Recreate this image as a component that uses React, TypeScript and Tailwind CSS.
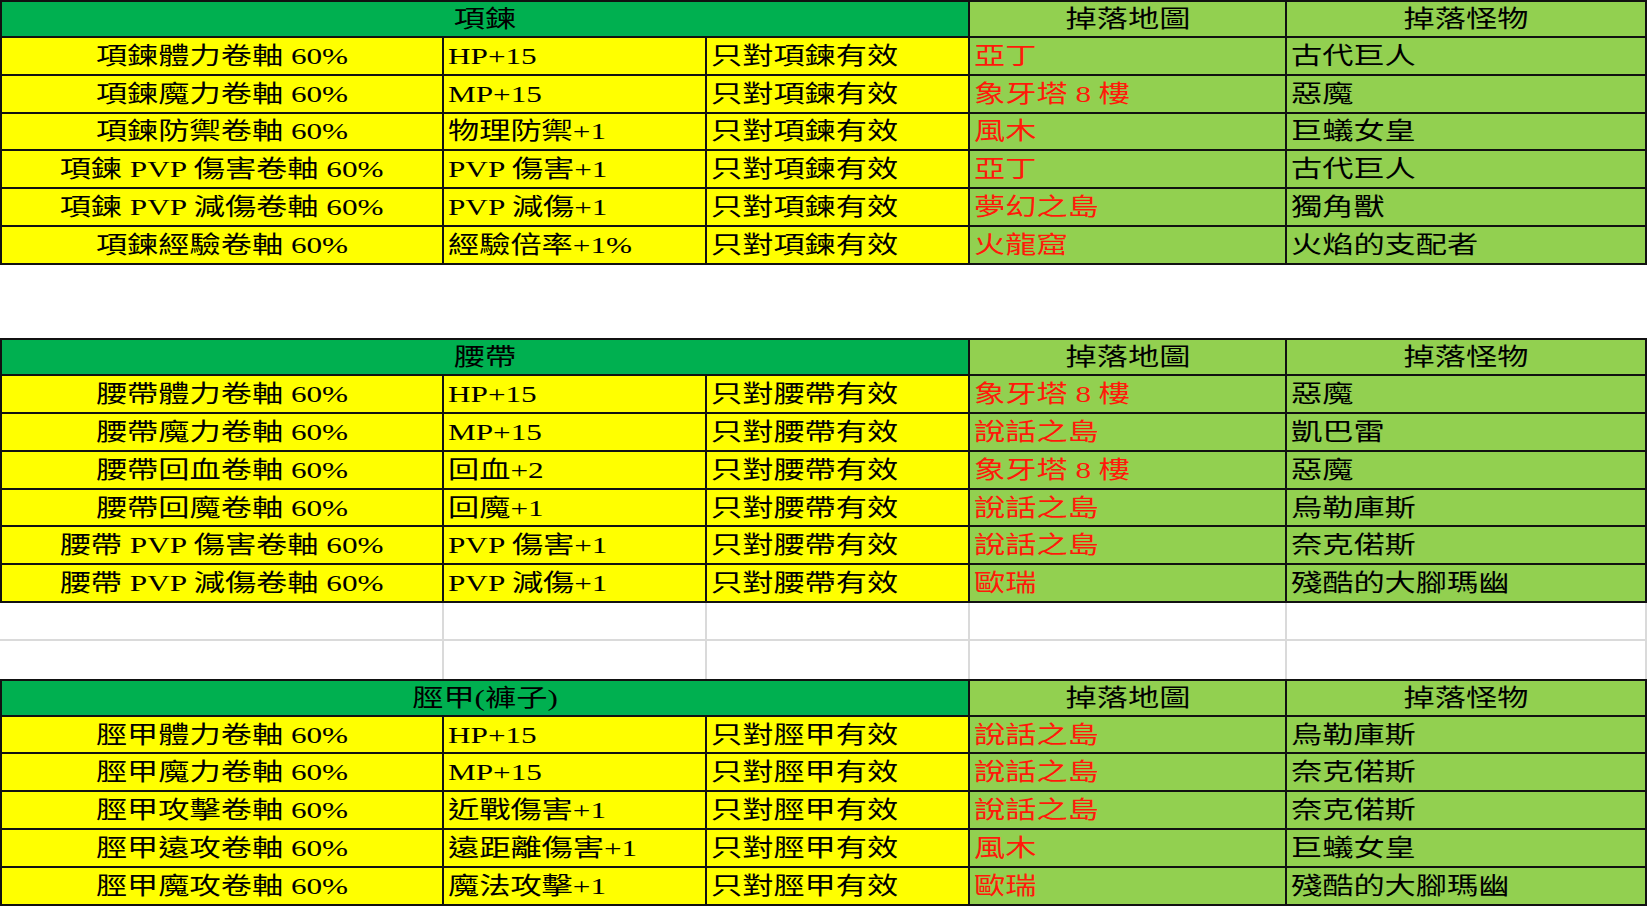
type Row = [string, string, string, string, string];

const necklace: Row[] = [
  ["項鍊體力卷軸 60%", "HP+15", "只對項鍊有效", "亞丁", "古代巨人"],
  ["項鍊魔力卷軸 60%", "MP+15", "只對項鍊有效", "象牙塔 8 樓", "惡魔"],
  ["項鍊防禦卷軸 60%", "物理防禦+1", "只對項鍊有效", "風木", "巨蟻女皇"],
  ["項鍊 PVP 傷害卷軸 60%", "PVP 傷害+1", "只對項鍊有效", "亞丁", "古代巨人"],
  ["項鍊 PVP 減傷卷軸 60%", "PVP 減傷+1", "只對項鍊有效", "夢幻之島", "獨角獸"],
  ["項鍊經驗卷軸 60%", "經驗倍率+1%", "只對項鍊有效", "火龍窟", "火焰的支配者"],
];

const belt: Row[] = [
  ["腰帶體力卷軸 60%", "HP+15", "只對腰帶有效", "象牙塔 8 樓", "惡魔"],
  ["腰帶魔力卷軸 60%", "MP+15", "只對腰帶有效", "說話之島", "凱巴雷"],
  ["腰帶回血卷軸 60%", "回血+2", "只對腰帶有效", "象牙塔 8 樓", "惡魔"],
  ["腰帶回魔卷軸 60%", "回魔+1", "只對腰帶有效", "說話之島", "烏勒庫斯"],
  ["腰帶 PVP 傷害卷軸 60%", "PVP 傷害+1", "只對腰帶有效", "說話之島", "奈克偌斯"],
  ["腰帶 PVP 減傷卷軸 60%", "PVP 減傷+1", "只對腰帶有效", "歐瑞", "殘酷的大腳瑪幽"],
];

const greaves: Row[] = [
  ["脛甲體力卷軸 60%", "HP+15", "只對脛甲有效", "說話之島", "烏勒庫斯"],
  ["脛甲魔力卷軸 60%", "MP+15", "只對脛甲有效", "說話之島", "奈克偌斯"],
  ["脛甲攻擊卷軸 60%", "近戰傷害+1", "只對脛甲有效", "說話之島", "奈克偌斯"],
  ["脛甲遠攻卷軸 60%", "遠距離傷害+1", "只對脛甲有效", "風木", "巨蟻女皇"],
  ["脛甲魔攻卷軸 60%", "魔法攻擊+1", "只對脛甲有效", "歐瑞", "殘酷的大腳瑪幽"],
];

const grid = "grid grid-cols-[444px_263px_263px_317px_360px] h-[37.85px]";
const cell = "flex items-center border-r-2 border-b-2 border-[#111] overflow-hidden";

function Txt({ children, center }: { children: string; center?: boolean }) {
  return (
    <span
      className={
        "inline-block whitespace-nowrap scale-x-[1.3] " +
        (center ? "origin-center" : "origin-left")
      }
    >
      {children}
    </span>
  );
}

function Header({ title }: { title: string }) {
  return (
    <div className={grid}>
      <div className={cell + " col-span-3 justify-center bg-[#00b050] border-t-2 border-l-2"}>
        <Txt center>{title}</Txt>
      </div>
      <div className={cell + " justify-center bg-[#92d050] border-t-2"}>
        <Txt center>掉落地圖</Txt>
      </div>
      <div className={cell + " justify-center bg-[#92d050] border-t-2"}>
        <Txt center>掉落怪物</Txt>
      </div>
    </div>
  );
}

function DataRow({ row }: { row: Row }) {
  return (
    <div className={grid}>
      <div className={cell + " justify-center bg-[#ffff00] border-l-2"}>
        <Txt center>{row[0]}</Txt>
      </div>
      <div className={cell + " bg-[#ffff00] pl-1"}>
        <Txt>{row[1]}</Txt>
      </div>
      <div className={cell + " bg-[#ffff00] pl-1"}>
        <Txt>{row[2]}</Txt>
      </div>
      <div className={cell + " bg-[#92d050] pl-1 text-[#ff1a0a]"}>
        <Txt>{row[3]}</Txt>
      </div>
      <div className={cell + " bg-[#92d050] pl-1"}>
        <Txt>{row[4]}</Txt>
      </div>
    </div>
  );
}

function Block({ title, rows }: { title: string; rows: Row[] }) {
  return (
    <div>
      <Header title={title} />
      {rows.map((r, i) => (
        <DataRow key={i} row={r} />
      ))}
    </div>
  );
}

function EmptyRow({ last }: { last?: boolean }) {
  const c = "border-r-2 border-[#dadada] " + (last ? "" : "border-b-2");
  return (
    <div className={grid}>
      <div className={c} />
      <div className={c} />
      <div className={c} />
      <div className={c} />
      <div className={c} />
    </div>
  );
}

export default function App() {
  return (
    <div className="w-[1650px] h-[906px] overflow-hidden bg-white text-black text-[24px] leading-none font-['Liberation_Serif','Noto_Sans_CJK_TC',serif]">
      <Block title="項鍊" rows={necklace} />
      <div className="h-[73.3px]" />
      <Block title="腰帶" rows={belt} />
      <EmptyRow />
      <EmptyRow last />
      <Block title="脛甲(褲子)" rows={greaves} />
    </div>
  );
}
